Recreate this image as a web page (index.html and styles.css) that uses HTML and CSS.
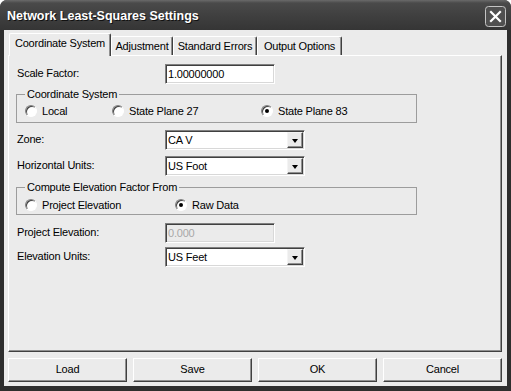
FILE: index.html
```html
<!DOCTYPE html>
<html lang="en">
<head>
    <meta charset="UTF-8">
    <meta name="viewport" content="width=device-width, initial-scale=1.0">
    <title>Network Least-Squares Settings</title>
    <link rel="stylesheet" href="styles.css">
</head>
<body>

<div class="window">
    <div class="titlebar">
        <span class="title">Network Least-Squares Settings</span>
        <span class="close">
            <svg width="21" height="21" viewBox="0 0 21 21">
                <rect x="0.5" y="0.5" width="20" height="20" rx="3" fill="#505050" stroke="#c4c4c4"/>
                <path d="M6 6 L15 15 M15 6 L6 15" stroke="#fff" stroke-width="2.2" stroke-linecap="square"/>
            </svg>
        </span>
    </div>

    <div class="client">
        <div class="tabs">
            <div class="tab active tab-coord">Coordinate System</div>
            <div class="tab tab-adjust">Adjustment</div>
            <div class="tab tab-std">Standard Errors</div>
            <div class="tab tab-out">Output Options</div>
        </div>

        <div class="panel">
            <div class="row">
                <label>Scale Factor:</label>
                <div class="edit">1.00000000</div>
            </div>

            <fieldset class="group">
                <legend>Coordinate System</legend>
                <div class="radios">
                    <span class="option opt-local"><span class="radio"></span>Local</span>
                    <span class="option opt-sp27"><span class="radio"></span>State Plane 27</span>
                    <span class="option"><span class="radio checked"></span>State Plane 83</span>
                </div>
            </fieldset>

            <div class="row row-zone">
                <label>Zone:</label>
                <div class="select">CA V<span class="drop"><span class="arrow"></span></span></div>
            </div>

            <div class="row row-units">
                <label>Horizontal Units:</label>
                <div class="select">US Foot<span class="drop"><span class="arrow"></span></span></div>
            </div>

            <fieldset class="group group-elev">
                <legend>Compute Elevation Factor From</legend>
                <div class="radios">
                    <span class="option opt-project"><span class="radio"></span>Project Elevation</span>
                    <span class="option"><span class="radio checked"></span>Raw Data</span>
                </div>
            </fieldset>

            <div class="row row-projelev">
                <label>Project Elevation:</label>
                <div class="edit disabled">0.000</div>
            </div>

            <div class="row row-elevunits">
                <label>Elevation Units:</label>
                <div class="select">US Feet<span class="drop"><span class="arrow"></span></span></div>
            </div>
        </div>

        <div class="buttons">
            <div class="btn">Load</div>
            <div class="btn">Save</div>
            <div class="btn">OK</div>
            <div class="btn">Cancel</div>
        </div>
    </div>
</div>

</body>
</html>
```

FILE: styles.css
```css
body {
    margin: 0;
    background: #fff;
    font-family: "Liberation Sans", Arial, sans-serif;
    font-size: 11px;
    letter-spacing: -0.2px;
    color: #000;
}
.window {
    width: 511px;
    height: 391px;
    background: #2e2e2e;
    border-radius: 7px 7px 0 0;
    box-sizing: border-box;
    overflow: hidden;
}
.titlebar {
    height: 30px;
    display: flex;
    justify-content: space-between;
    align-items: flex-start;
    padding: 0 5px 0 7px;
    background: linear-gradient(#6a6a6a 0, #4a4a4a 3px, #404040 50%, #353535 100%);
}
.title {
    padding-top: 9px;
    font-size: 12.5px;
    font-weight: bold;
    letter-spacing: 0;
    color: #fff;
    text-shadow: 1px 1px 0 #111;
}
.close {
    padding-top: 6px;
    height: 21px;
}
.client {
    height: 356px;
    margin: 0 4px;
    padding: 3px 5px 0 4px;
    background: #ebebeb;
    box-sizing: border-box;
}
.tabs {
    display: flex;
    align-items: flex-end;
    height: 22px;
    padding-left: 1px;
}
.tab {
    height: 19px;
    box-sizing: border-box;
    border: 1px solid;
    border-color: #fff #404040 transparent #fff;
    border-bottom: none;
    border-radius: 2px 2px 0 0;
    box-shadow: inset -1px 0 #909090;
    text-align: center;
    line-height: 13px;
    padding-top: 3px;
}
.tab.active {
    height: 23px;
    margin-bottom: -1px;
    position: relative;
    z-index: 1;
    background: #ebebeb;
    padding-top: 3px;
}
.tab-coord { width: 102px; }
.tab-adjust { width: 62px; }
.tab-std { width: 84px; }
.tab-out { width: 85px; }
.panel {
    height: 297px;
    box-sizing: border-box;
    border: 1px solid;
    border-color: #fff #404040 #404040 #fff;
    box-shadow: inset -1px -1px #909090;
    padding: 8px 0 0 8px;
}
.row {
    display: flex;
    align-items: center;
    height: 20px;
}
.row label {
    width: 148px;
    margin-top: -2px;
}
.edit, .select {
    height: 20px;
    box-sizing: border-box;
    border: 1px solid;
    border-color: #808080 #fff #fff #808080;
    box-shadow: inset 1px 1px #404040, inset -1px -1px #d8d8d8;
    background: #fff;
    padding-left: 2px;
    line-height: 18px;
}
.edit {
    width: 110px;
}
.edit.disabled {
    background: #ebebeb;
    color: #a8a8a8;
}
.select {
    width: 140px;
    display: flex;
    justify-content: space-between;
    align-items: center;
    padding-right: 1px;
}
.drop {
    width: 16px;
    height: 16px;
    box-sizing: border-box;
    border: 1px solid;
    border-color: #f4f4f4 #404040 #404040 #f4f4f4;
    box-shadow: inset -1px -1px #909090;
    background: #ebebeb;
    display: flex;
    justify-content: center;
    align-items: center;
}
.arrow {
    width: 0;
    height: 0;
    border-left: 3.5px solid transparent;
    border-right: 3.5px solid transparent;
    border-top: 4px solid #000;
    margin-top: 1px;
}
.group {
    width: 401px;
    box-sizing: border-box;
    margin: 4px 0 0 -1px;
    padding: 2px 8px 4px 8px;
    border: 1px solid #9c9c9c;
    min-width: 0;
}
.group legend {
    padding: 0 2px;
    line-height: 13px;
}
.radios {
    display: flex;
    align-items: center;
    height: 15px;
}
.option {
    display: flex;
    align-items: center;
}
.opt-local { width: 87px; }
.opt-sp27 { width: 149px; }
.opt-project { width: 150px; }
.radio {
    width: 12px;
    height: 12px;
    box-sizing: border-box;
    border-radius: 50%;
    border: 1px solid;
    border-color: #808080 #fff #fff #808080;
    box-shadow: inset 1px 1px #404040;
    background: #fff;
    margin-right: 5px;
    display: flex;
    justify-content: center;
    align-items: center;
}
.radio.checked::after {
    content: "";
    width: 4px;
    height: 4px;
    border-radius: 50%;
    background: #000;
}
.row-zone { margin-top: 7px; }
.row-units { margin-top: 6px; }
.group-elev { margin-top: 5px; padding-top: 3px; padding-bottom: 2px; }
.row-projelev { margin-top: 8px; }
.row-elevunits { margin-top: 4px; }
.buttons {
    display: grid;
    grid-template-columns: repeat(4, 1fr);
    gap: 6px;
    margin-top: 6px;
}
.btn {
    height: 24px;
    box-sizing: border-box;
    border: 1px solid;
    border-color: #fff #404040 #404040 #fff;
    box-shadow: inset -1px -1px #909090;
    text-align: center;
    line-height: 21px;
}
```
